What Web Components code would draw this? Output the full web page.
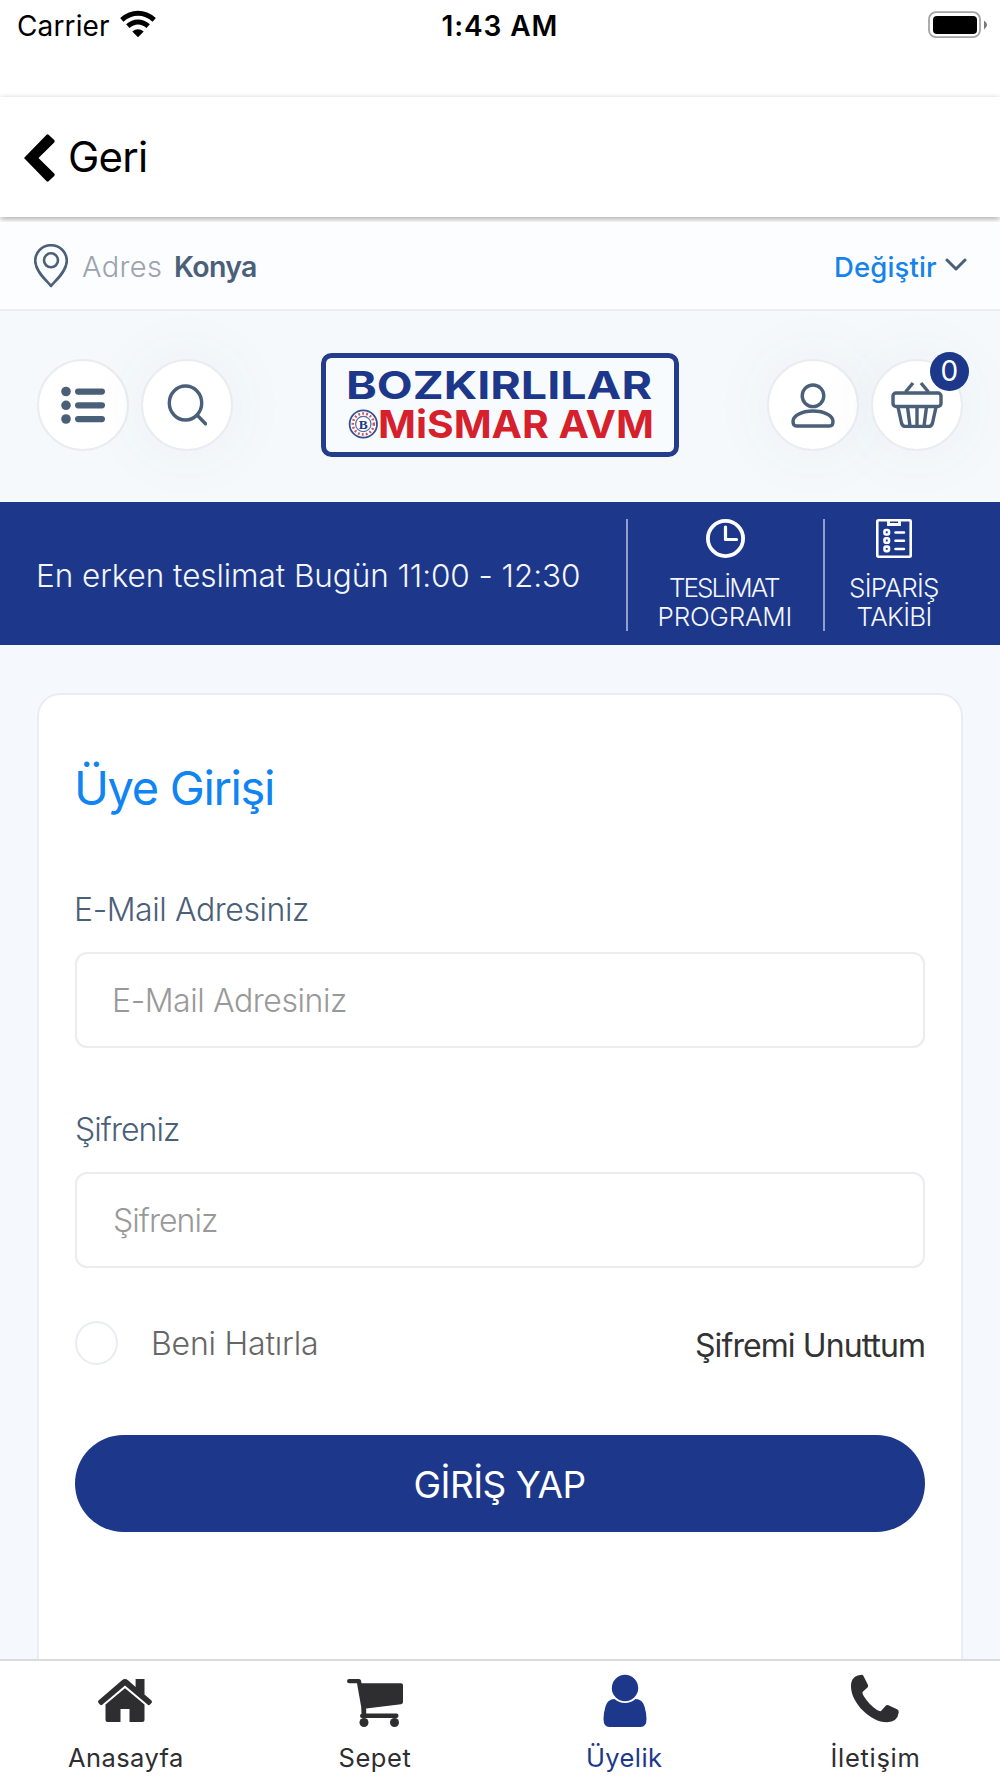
<!DOCTYPE html>
<html lang="tr">
<head>
<meta charset="utf-8">
<meta name="viewport" content="width=device-width">
<title>Üye Girişi</title>
<style>
  body { margin: 0; background: #fff; font-family: Inter, "Liberation Sans", sans-serif; }
</style>
</head>
<body>
<app-screen></app-screen>
<script>
const define = (name, html, setup) => {
  const tpl = document.createElement('template');
  tpl.innerHTML = html;
  customElements.define(name, class extends HTMLElement {
    constructor() {
      super();
      this.attachShadow({ mode: 'open' }).append(tpl.content.cloneNode(true));
    }
    connectedCallback() { if (setup) setup.call(this, this.shadowRoot); }
  });
};

/* A one-line text whose tracking is adjusted so its ink fills the width `w`. */
const ctx = document.createElement('canvas').getContext('2d');
define('fit-text', `
  <style>
    :host { display: block; flex: none; white-space: nowrap; }
    span { display: block; width: max-content; font-size: inherit; }
  </style><span><slot></slot></span>`,
  function (root) {
    const size = +this.getAttribute('size'), weight = this.getAttribute('weight') || 400;
    const w = +this.getAttribute('w'), text = this.textContent;
    const span = root.querySelector('span');
    ctx.font = `${weight} ${size}px Inter, "Liberation Sans", sans-serif`;
    const m = ctx.measureText(text);
    const ink = m.actualBoundingBoxLeft + m.actualBoundingBoxRight;
    const track = text.length > 1 ? (w - ink) / (text.length - 1) : 0;
    this.style.cssText += `;width:${w}px;font-size:${size}px;font-weight:${weight}`;
    this.style.lineHeight = (this.getAttribute('lh') || 30) + 'px';
    span.style.letterSpacing = track + 'px';
    span.style.marginLeft = m.actualBoundingBoxLeft + 'px';
  });

define('status-bar', `
  <style>
    :host { display: grid; grid-template-columns: 1fr auto 1fr; align-items: center; height: 51px; margin-bottom: 46px; padding: 0 13px; color: #000; }
    .l { display: flex; align-items: center; gap: 10px; margin-left: 5px; }
    svg { display: block; }
    .t { margin-right: 2px; }
    .b { justify-self: end; margin-top: -2px; }
    .w { margin-top: -4px; }
  </style>
  <div class="l"><fit-text size="28" w="91">Carrier</fit-text>
    <svg class="w" width="38" height="28" viewBox="0 0 38 28" fill="none" stroke="#000">
      <path d="M2.8 9.8Q10.5 3.3 19 3.3t16.200 6.500" stroke-width="5"/>
      <path d="M8.800 16.200Q13.500 12 19 12t10.200 4.200" stroke-width="5"/>
      <path d="M13.300 21.500Q19 17 24.700 21.500L19 27.200z" fill="#000" stroke="none"/>
    </svg></div>
  <fit-text class="t" size="28" weight="600" w="113">1:43 AM</fit-text>
  <svg class="b" width="59" height="28" viewBox="0 0 59 28">
    <rect x="1" y="1.200" width="51" height="25" rx="7" fill="#fff" stroke="#a3a3a3" stroke-width="1.800"/>
    <rect x="5" y="5" width="44" height="18" rx="4" fill="#000"/>
    <path d="M56 9.500q6 4.500 0 9z" fill="#777"/>
  </svg>`);

define('nav-bar', `
  <style>
    :host { display: flex; align-items: center; gap: 15px; height: 120px; box-sizing: border-box; padding: 0 24px 0; margin-bottom: 5px; background: #fff; box-shadow: 0 2px 6px rgba(0,0,0,.34); color: #000; }
    svg { display: block; margin-top: 1px; }
  </style>
  <svg width="31" height="48" viewBox="0 0 31 48"><path d="M22.600.700 0 24l22.600 23.300q1 .800 2 0l5.600-5.300q1-1.200 0-2.400L14.500 24 30.200 8.400q1-1.200 0-2.400L24.600.700q-1-.800-2 0z"/></svg>
  <fit-text size="42" w="76" lh="48">Geri</fit-text>`);

define('address-bar', `
  <style>
    :host { position: relative; display: flex; align-items: center; height: 87px; padding: 0 33px 0 34px; background: #fcfdff; border-bottom: 2px solid #e9eef4; color: #4a6079; }
    svg { display: block; fill: none; stroke: #4a6079; }
    fit-text { margin-top: 2px; }
    .a { margin-left: 14px; color: #9aa3ae; }
    .k { margin-left: 15px; }
    .d { margin-left: auto; color: #1583ea; }
    .c { margin: -2px 0 0 8px; }
  </style>
  <svg width="34" height="44" viewBox="0 0 34 44" stroke-width="2.600"><path d="M17 42C13 37 1.200 27.500 1.200 16.800a15.800 15.600 0 0 1 31.600 0C32.800 27.500 21 37 17 42z" stroke-linejoin="round"/><circle cx="17" cy="16.300" r="7"/></svg>
  <fit-text class="a" size="29" weight="330" w="79">Adres</fit-text>
  <fit-text class="k" size="28.500" weight="600" w="80">Konya</fit-text>
  <fit-text class="d" size="27.500" weight="500" w="101">Değiştir</fit-text>
  <svg class="c" width="22" height="13" viewBox="0 0 22 13" stroke-width="3" stroke-linecap="round" stroke-linejoin="round"><path d="M2 2l9 9 9-9"/></svg>`);

define('round-button', `
  <style>
    :host { position: relative; display: flex; align-items: center; justify-content: center; flex: none; width: 88px; height: 88px; border: 2px solid #ebecf2; border-radius: 50%; background: #fff; }
    :host([glow]) { box-shadow: 0 0 70px rgba(74,96,121,.06); }
    ::slotted(svg) { display: block; }
  </style><slot></slot>`);

define('count-badge', `
  <style>
    :host { position: absolute; right: -8px; top: -9px; display: flex; align-items: center; justify-content: center; width: 39px; height: 39px; border-radius: 50%; background: #1d388a; color: #fff; }
  </style><fit-text size="28" w="16">0</fit-text>`);

define('brand-logo', `
  <style>:host { display: block; } svg { display: block; font-family: Inter, "Liberation Sans", sans-serif; }</style>
  <svg width="358" height="104" viewBox="0 0 358 104">
    <rect x="2.500" y="2.500" width="353" height="99" rx="8" fill="#f8fbfe" stroke="#233d8b" stroke-width="5"/>
    <text x="25" y="45.600" font-size="38.500" font-weight="700" fill="#1d388a" textLength="306" lengthAdjust="spacingAndGlyphs">BOZKIRLILAR</text>
    <text x="57" y="85" font-size="38.500" font-weight="750" fill="#d6202b" textLength="276" lengthAdjust="spacingAndGlyphs">MiSMAR AVM</text>
    <g fill="none"><circle cx="42.300" cy="71" r="13.700" stroke="#34508f" stroke-width="1.800" fill="#fff"/>
    <circle cx="42.300" cy="71" r="10.500" stroke="#c95763" stroke-width="2.600" stroke-dasharray="1.900 2.100"/>
    <circle cx="42.300" cy="71" r="7.700" stroke="#526ba3" stroke-width="1.200"/></g>
    <text x="42.300" y="75.800" font-size="13.500" font-weight="700" text-anchor="middle" fill="#1d388a" style="font-family:'Liberation Serif',serif">B</text>
  </svg>`);

define('shop-header', `
  <style>
    :host { display: flex; align-items: center; justify-content: space-between; box-sizing: border-box; height: 191px; padding: 0 37px 4px 37px; background: #f5f9fc; }
    div { display: flex; gap: 12px; }
    svg { display: block; fill: none; stroke: #4a6079; stroke-width: 3.400; stroke-linecap: round; stroke-linejoin: round; }
  </style>
  <div>
    <round-button><svg width="44" height="38" viewBox="0 0 44 38"><g fill="#4a6079" stroke="none"><circle cx="5" cy="5.500" r="4.800"/><circle cx="5" cy="19.300" r="4.800"/><circle cx="5" cy="33" r="4.800"/><rect x="14" y="2.500" width="30" height="6.200" rx="3.100"/><rect x="14" y="16.200" width="30" height="6.200" rx="3.100"/><rect x="14" y="30" width="30" height="6.200" rx="3.100"/></g></svg></round-button>
    <round-button glow><svg width="40" height="42" viewBox="0 0 40 42"><ellipse cx="18.500" cy="19" rx="16.200" ry="17"/><path d="M30.500 31.500l8 8.300"/></svg></round-button>
  </div>
  <brand-logo></brand-logo>
  <div>
    <round-button glow><svg style="margin-top:1px" width="44" height="45" viewBox="0 0 44 45"><circle cx="22" cy="12.800" r="10.800"/><path d="M5.500 43Q2 43 2 38.500C2 33 10 28 22 28s20 5 20 10.500q0 4.500-3.500 4.500z"/></svg></round-button>
    <round-button glow><svg style="margin-top:-2px" width="52" height="48" viewBox="0 0 52 48"><rect x="2" y="13" width="48" height="13.500" rx="3"/><path d="M14.500 12l7.500-9M37.500 12L30 3M7 27l3.500 16q1 3.500 4 3.500h23q3 0 4-3.500L45 27M16.500 27l2.500 19M26 27v19M35.500 27L33 46" stroke-linecap="butt"/></svg><count-badge></count-badge></round-button>
  </div>`);

define('delivery-link', `
  <style>
    :host { display: flex; flex-direction: column; align-items: center; box-sizing: border-box; height: 112px; border-left: 2px solid #8f9fd0; color: #f4f6ff; }
    ::slotted(svg) { display: block; height: 39px; margin-bottom: 15px; }
  </style><slot></slot>`);

define('delivery-band', `
  <style>
    :host { display: flex; height: 143px; box-sizing: border-box; padding: 17px 37px 14px 39px; background: #1d388a; color: #f4f6ff; }
    .t { margin: 41px auto 0 0; }
    delivery-link { width: 197px; box-sizing: border-box; padding-right: 1px; }
    delivery-link + delivery-link { width: 140px; padding-right: 0; }
    svg { fill: none; stroke: #fff; }
  </style>
  <fit-text class="t" size="31.500" weight="340" w="540" lh="31">En erken teslimat Bugün 11:00 - 12:30</fit-text>
  <delivery-link>
    <svg width="39" height="39" viewBox="0 0 39 39" stroke-width="3.800"><circle cx="19.500" cy="19.500" r="17.600"/><path d="M19.500 8v12.500h11" stroke-width="3.200" stroke-linecap="round" stroke-linejoin="round"/></svg>
    <fit-text size="26" weight="330" w="110" lh="29">TESLİMAT</fit-text>
    <fit-text size="26" weight="330" w="131" lh="29">PROGRAMI</fit-text>
  </delivery-link>
  <delivery-link>
    <svg width="36" height="39" viewBox="0 0 36 39" stroke-width="2.600"><rect x="1.300" y="1.300" width="33.400" height="36.400" rx="1"/><path d="M12.500 2v3.500h11V2" stroke-width="2.800"/><g><rect x="8.500" y="11" width="4.500" height="4.500" rx="1.500"/><rect x="8.500" y="19.300" width="4.500" height="4.500" rx="1.500"/><rect x="8.500" y="27.600" width="4.500" height="4.500" rx="1.500"/><path d="M19.500 13.500h8.500M19.500 21.800h8.500M19.500 30h8.500" stroke-linecap="round"/></g></svg>
    <fit-text size="26" weight="330" w="88" lh="29">SİPARİŞ</fit-text>
    <fit-text size="26" weight="330" w="73" lh="29">TAKİBİ</fit-text>
  </delivery-link>`);

define('form-field', `
  <style>
    :host { display: block; color: #4a6079; }
    .box { display: flex; align-items: center; height: 96px; box-sizing: border-box; margin-top: 27px; padding: 2px 38px 0; border: 2px solid #eaecf2; border-radius: 12px; color: #999; }
    slot { display: block; padding-left: 2px; }
    .box slot { padding: 0; }
  </style>
  <slot name="label"></slot><div class="box" role="textbox"><slot></slot></div>`);

define('login-card', `
  <style>
    :host { display: flex; flex-direction: column; flex: 1; box-sizing: border-box; margin: 48px 37px 0; padding: 69px 36px 0; background: #fff; border: 2px solid #eaecf3; border-bottom: 0; border-radius: 23px 23px 0 0; }
    .title { margin: 0 0 83px 3px; color: #0f84f2; }
    form-field + form-field { margin-top: 67px; }
    .row { display: flex; align-items: center; height: 44px; margin: 53px 1px 70px 0; }
    .radio { width: 39px; height: 40px; border: 2px solid #e9ecf1; border-radius: 50%; margin-right: 36px; }
    .beni { margin-top: 2px; color: #666; }
    .forgot { margin: 6px 0 0 auto; color: #333; }
    .btn { display: flex; align-items: center; justify-content: center; height: 97px; box-sizing: border-box; padding-top: 2px; border-radius: 49px; background: #1d388a; color: #fff; }
  </style>
  <fit-text class="title" size="47" w="195" lh="48">Üye Girişi</fit-text>
  <form-field><fit-text slot="label" size="32" weight="340" w="231">E-Mail Adresiniz</fit-text><fit-text size="32" weight="340" w="231">E-Mail Adresiniz</fit-text></form-field>
  <form-field><fit-text slot="label" size="32" weight="340" w="102">Şifreniz</fit-text><fit-text size="32" weight="340" w="102">Şifreniz</fit-text></form-field>
  <div class="row"><div class="radio" role="checkbox"></div>
    <fit-text class="beni" size="32" weight="340" w="162">Beni Hatırla</fit-text>
    <fit-text class="forgot" size="32" w="228">Şifremi Unuttum</fit-text></div>
  <div class="btn" role="button"><fit-text size="37" w="169" lh="40">GİRİŞ YAP</fit-text></div>`);

define('tab-item', `
  <style>
    :host { display: flex; flex-direction: column; align-items: center; flex: 1 1 0; padding-top: 12px; color: #2e2e30; fill: currentColor; }
    :host([active]) { color: #1d388a; }
    ::slotted(svg) { display: block; width: 56px; height: 56px; margin-bottom: 14px; }
  </style><slot></slot>`);

define('tab-bar', `
  <style>
    :host { display: flex; flex: none; height: 117px; border-top: 2px solid #dadbde; background: #fff; }
  </style>
  <tab-item><svg viewBox="0 0 56 56"><path d="M28 6q1.600 0 3 1.200L38.600 14V6H47.500V21.500L54.500 27.500Q55.500 29 54.500 30L52.500 32Q51.500 32.500 50.500 31.500L28 12.500 5.500 31.500Q4.500 32.500 3.500 32L1.500 30Q.500 28.500 1.500 27.500L25 7.200Q26.400 6 28 6z"/><path d="M28 15.300L47.500 31.500V47Q47.500 49 45.500 49H32.500V36H23.500V49H10.500Q8.500 49 8.500 47V31.500z"/></svg>
    <fit-text size="25.500" w="114">Anasayfa</fit-text></tab-item>
  <tab-item><svg viewBox="0 0 56 56"><path d="M2.200 6H12q1.500 0 2 1.500L14.500 10.300H54q2 0 2 2V29q0 2-2 2.300L19.200 35.500V40.500H49.500q2 0 2 2.250t-2 2.250H15q-2 0-2-2t1.500-2.300L14.200 34 10 10.300H2.200Q0 10.300 0 8.200T2.200 6z"/><circle cx="17" cy="49.500" r="4.500"/><circle cx="47.500" cy="49.500" r="4.500"/></svg>
    <fit-text size="25.500" w="71">Sepet</fit-text></tab-item>
  <tab-item active><svg viewBox="0 0 56 56"><circle cx="28" cy="15" r="13.200"/><path d="M17.500 26Q22 30 28 30T38.500 26Q45.500 26 47.500 33.500 49.500 40 49.500 46 49.500 54 43.500 54H12.500Q6.500 54 6.500 46 6.500 40 8.500 33.500 10.500 26 17.500 26z"/></svg>
    <fit-text size="25.500" w="74">Üyelik</fit-text></tab-item>
  <tab-item><svg viewBox="0 0 56 56"><path d="M13.500 2Q15.500 1.300 16.500 3L21 12Q21.500 13.300 20.500 14.500L15.500 19Q15 20.500 17 23.500 22 31.500 30 37Q32.500 38.500 34 38L38.500 33Q39.500 31.500 41.500 32.200L50.500 36.500Q52 37.500 51.700 39.500 50.500 49 40 49.300C24 49.500 4 30 4 13.500 4 5.500 8 2.500 13.500 2z"/></svg>
    <fit-text size="25.500" w="87">İletişim</fit-text></tab-item>`);

define('app-screen', `
  <style>
    :host { display: flex; flex-direction: column; width: 1000px; height: 1778px; overflow: hidden; background: #fff; }
    main { display: flex; flex-direction: column; flex: 1; min-height: 0; background: #f5f9fd; }
  </style>
  <status-bar></status-bar>
  <nav-bar></nav-bar>
  <address-bar></address-bar>
  <shop-header></shop-header>
  <delivery-band></delivery-band>
  <main><login-card></login-card></main>
  <tab-bar></tab-bar>`);
</script>
</body>
</html>
